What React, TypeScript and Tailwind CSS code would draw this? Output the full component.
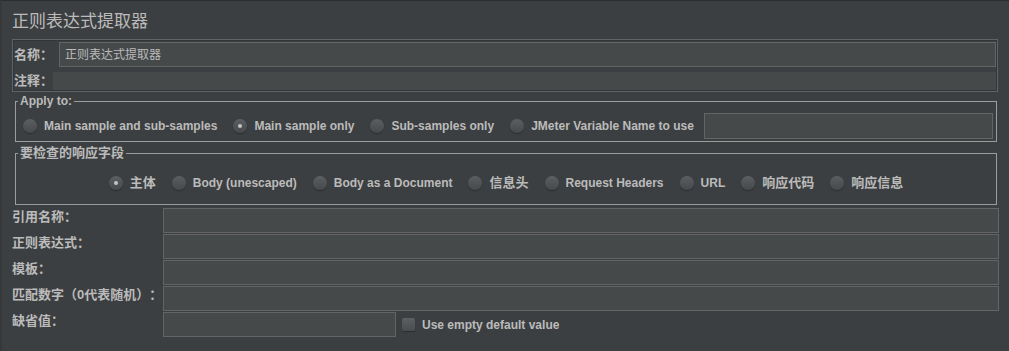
import React from 'react';

// --- Small building blocks ---
const Radio = ({
  label,
  checked = false,
  cjk = false,
}: {
  label: string;
  checked?: boolean;
  cjk?: boolean;
}) => (
  <label className="flex items-center mr-[16px] last:mr-0 shrink-0">
    <span className="w-[14px] h-[14px] rounded-full bg-linear-to-b from-[#5c5f62] to-[#46494b] shadow-[0_1px_1px_#2a2c2e] flex items-center justify-center">
      {checked && <span className="w-[4px] h-[4px] rounded-full bg-[#c4c4c4]" />}
    </span>
    <span
      className={`ml-[7px] font-bold text-[#bbbbbb] whitespace-nowrap ${
        cjk ? 'text-[13px]' : 'text-[12px]'
      }`}>
      {label}
    </span>
  </label>
);

const Field = ({ className = '' }: { className?: string }) => (
  <div className={`bg-[#45494a] border border-[#646464] ${className}`} />
);

const Row = ({ label, children }: { label: string; children?: React.ReactNode }) => (
  <div className="flex items-start mb-[1px]">
    <span className="w-[151px] shrink-0 text-[13px] leading-[17px] font-bold text-[#bbbbbb] whitespace-nowrap">
      {label}
    </span>
    {children ?? <Field className="flex-1 h-[25px]" />}
  </div>
);

const RegexExtractor: React.FC = () => {
  return (
    <div className="w-[1009px] h-[351px] overflow-hidden bg-[#3c3f41] border-t border-t-[#2b2d30] border-l-2 border-l-[#36383a] font-['Liberation_Sans','Noto_Sans_CJK_SC',sans-serif] text-[#bbbbbb] [text-spacing-trim:space-all]">
      <div className="pl-[10px] pr-[10px]">
        {/* Title */}
        <div className="mt-[9px] h-[24px] text-[17px] leading-[24px]">正则表达式提取器</div>

        {/* Name / comment panel */}
        <div className="mt-[5px] mr-[1px] border border-[#606365] shadow-[inset_0_0_0_1px_#333537] pt-[2px] pb-[1px] pr-[1px] pl-[1px]">
          <div className="flex items-center h-[25px]">
            <span className="w-[45px] shrink-0 text-[13px] font-bold">名称：</span>
            <div className="flex-1 h-[25px] bg-[#45494a] border border-[#646464] flex items-center pl-[5px] text-[12px]">
              正则表达式提取器
            </div>
          </div>
          <div className="flex items-center h-[18px] mt-[5px]">
            <span className="w-[39px] shrink-0 text-[13px] font-bold">注释：</span>
            <div className="flex-1 h-[18px] bg-[#45494a]" />
          </div>
        </div>

        {/* Apply to */}
        <fieldset className="mt-[2px] ml-[3px] mr-[2px] border border-[#9c9c9c]">
          <legend className="ml-[2px] px-[2px] text-[12px] leading-[14px] font-bold">Apply to:</legend>
          <div className="flex items-center h-[28px] mt-[4px] mb-[1px] pl-[7px] pr-[3px]">
            <div className="flex items-center">
              <Radio label="Main sample and sub-samples" />
              <Radio label="Main sample only" checked />
              <Radio label="Sub-samples only" />
              <Radio label="JMeter Variable Name to use" />
            </div>
            <Field className="flex-1 h-[26px] ml-[10px]" />
          </div>
        </fieldset>

        {/* Field to check */}
        <fieldset className="mt-[3px] ml-[3px] mr-[2px] border border-[#9c9c9c]">
          <legend className="ml-[2px] px-[2px] text-[13px] leading-[16px] font-bold">要检查的响应字段</legend>
          <div className="flex items-center justify-center h-[28px] mt-[8px] mb-[7px]">
            <Radio label="主体" checked cjk />
            <Radio label="Body (unescaped)" />
            <Radio label="Body as a Document" />
            <Radio label="信息头" cjk />
            <Radio label="Request Headers" />
            <Radio label="URL" />
            <Radio label="响应代码" cjk />
            <Radio label="响应信息" cjk />
          </div>
        </fieldset>

        {/* Extractor parameters */}
        <div className="mt-[3px]">
          <Row label="引用名称：" />
          <Row label="正则表达式：" />
          <Row label="模板：" />
          <Row label="匹配数字（0代表随机）：" />
          <Row label="缺省值：">
            <div className="flex items-center">
              <Field className="w-[233px] h-[25px]" />
              <span className="ml-[6px] w-[13px] h-[13px] rounded-[2px] bg-linear-to-b from-[#5c5f61] to-[#4a4d4f] shadow-[0_1px_1px_#2a2c2e]" />
              <span className="ml-[7px] text-[12px] font-bold">Use empty default value</span>
            </div>
          </Row>
        </div>
      </div>
    </div>
  );
};

export default function App() {
  return <RegexExtractor />;
}
